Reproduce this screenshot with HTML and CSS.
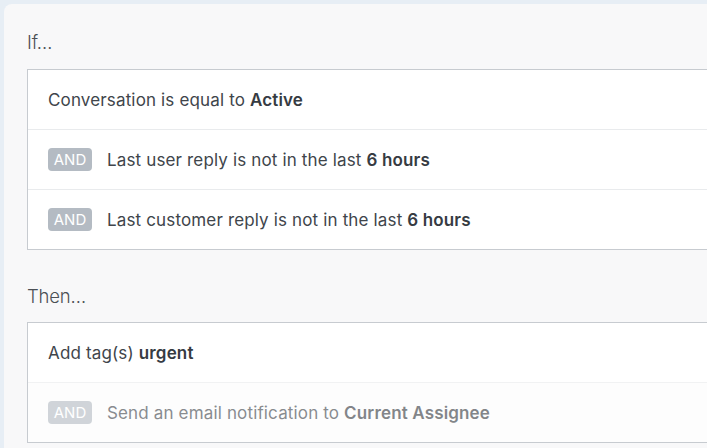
FILE: index.html
```html
<!DOCTYPE html>
<html>
<head>
<meta charset="utf-8">
<link rel="stylesheet" href="styles.css">
</head>
<body>
<div class="frame">
  <div class="panel">
    <div class="label">If…</div>
    <div class="box">
      <div class="row">Conversation is equal to&nbsp;<b>Active</b></div>
      <div class="row"><span class="and">AND</span>Last user reply is not in the last&nbsp;<b>6 hours</b></div>
      <div class="row"><span class="and">AND</span>Last customer reply is not in the last&nbsp;<b>6 hours</b></div>
    </div>
    <div class="label then">Then…</div>
    <div class="box">
      <div class="row">Add tag(s)&nbsp;<b>urgent</b></div>
      <div class="row faded"><span class="and">AND</span>Send an email notification to&nbsp;<b>Current Assignee</b></div>
    </div>
  </div>
</div>
</body>
</html>
```
FILE: styles.css
```css
html, body {
  margin: 0;
  padding: 0;
  background: #ffffff;
  width: 712px;
  height: 448px;
  overflow: hidden;
  font-family: Inter, "Liberation Sans", sans-serif;
}
.frame {
  width: 703px;
  height: 448px;
  background: #e7eef5;
  padding: 4px 0 0 4px;
  box-sizing: content-box;
}
.panel {
  height: 100%;
  background: #f8f8f9;
  border-top-left-radius: 8px;
  padding: 26px 0 0 23px;
  box-sizing: border-box;
  overflow: hidden;
}
.label {
  font-size: 18.5px;
  line-height: 24px;
  font-weight: 300;
  color: #4b5055;
  margin-bottom: 15px;
  letter-spacing: -0.2px;
}
.label.then {
  margin-top: 34px;
  margin-bottom: 14px;
}
.box {
  background: #ffffff;
  border: 1px solid #c7cbd0;
  border-right: none;
}
.row {
  height: 59px;
  display: flex;
  align-items: center;
  padding-left: 20px;
  font-size: 17px;
  color: #40454b;
  letter-spacing: 0.15px;
}
.row + .row {
  border-top: 1px solid #e9ebed;
}
.row b {
  font-weight: 600;
  color: #363b42;
}
.and {
  display: inline-flex;
  align-items: center;
  justify-content: center;
  width: 44px;
  height: 23px;
  border-radius: 4px;
  background: #b4bbc3;
  color: #ffffff;
  font-size: 15px;
  font-weight: 400;
  margin-right: 15px;
  letter-spacing: 0;
}
.row.faded {
  opacity: 0.62;
  background: #fcfcfc;
}
```
